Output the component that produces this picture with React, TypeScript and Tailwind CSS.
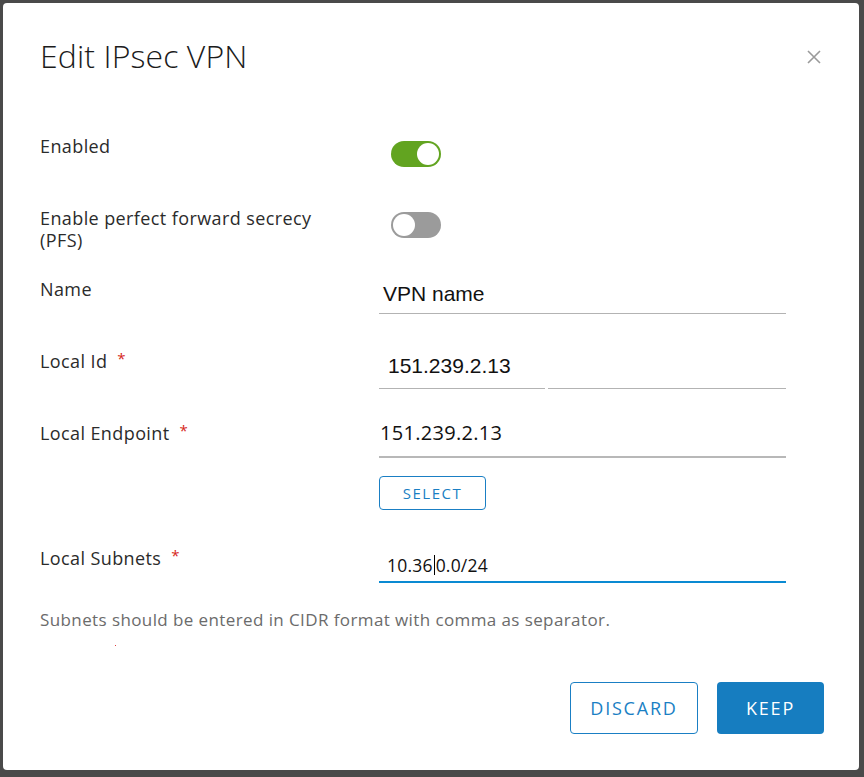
import React from "react";

function Toggle({ on }: { on: boolean }) {
  return (
    <div
      className={
        "w-[50px] h-[26px] rounded-full p-[2px] flex " +
        (on ? "bg-[#62a420] justify-end" : "bg-[#9b9b9b] justify-start")
      }
    >
      <div className="w-[22px] h-[22px] rounded-full bg-white" />
    </div>
  );
}

function Req() {
  return <span className="ml-[10px] text-[#d6261a] text-[15px] leading-none relative top-[1px]">*</span>;
}

export default function App() {
  const sans = { fontFamily: '"Open Sans", "Noto Sans", sans-serif' };
  const helv = { fontFamily: '"Liberation Sans", Arial, sans-serif' };
  const label = "w-[339px] text-[18px] leading-[22px] tracking-[0.4px] flex items-start";
  return (
    <div className="w-[864px] h-[777px] bg-[#4a4a4a] pt-[3px] pl-[3px] pr-[5px] pb-[7px]">
      <div className="bg-white rounded-[4px] h-full px-[37px] text-[#2b2b2b]" style={sans}>
        <div className="flex items-center justify-between pt-[31px]">
          <h1 className="text-[32px] font-light leading-[44px] tracking-[0.1px] text-[#1b1b1b]">Edit IPsec VPN</h1>
          <svg width="16" height="16" viewBox="0 0 16 16" className="mt-[2px]">
            <path d="M2 2 L14 14 M14 2 L2 14" stroke="#9a9a9a" strokeWidth="1.6" fill="none" />
          </svg>
        </div>

        <div className="mt-[57px] flex">
          <div className={label}>Enabled</div>
          <div className="mt-[6px] ml-[12px]">
            <Toggle on={true} />
          </div>
        </div>

        <div className="mt-[40px] flex">
          <div className={label}>
            <div>
              Enable perfect forward secrecy
              <br />
              (PFS)
            </div>
          </div>
          <div className="mt-[5px] ml-[12px]">
            <Toggle on={false} />
          </div>
        </div>

        <div className="mt-[27px] flex">
          <div className={label}>Name</div>
          <div className="w-[407px] h-[36px] border-b border-[#b3b3b3] flex items-center pl-[4px] pb-[3px] text-[21px] text-[#111]" style={helv}>
            VPN name
          </div>
        </div>

        <div className="mt-[36px] flex">
          <div className={label}>
            Local Id<Req />
          </div>
          <div className="w-[407px] h-[36px] flex flex-col">
            <div className="flex-1 flex items-center pl-[9px] pb-[6px] text-[21px] text-[#111]" style={helv}>151.239.2.13</div>
            <div className="flex gap-[3px]">
              <div className="w-[166px] h-[1px] bg-[#b3b3b3]" />
              <div className="flex-1 h-[1px] bg-[#b3b3b3]" />
            </div>
          </div>
        </div>

        <div className="mt-[36px] flex">
          <div className={label}>
            Local Endpoint<Req />
          </div>
          <div className="w-[407px]">
            <div className="h-[36px] border-b-2 border-[#b8b8b8] flex items-center pl-[1px] pb-[12px] text-[20px] tracking-[0.3px] text-[#111]">
              151.239.2.13
            </div>
            <button className="mt-[18px] w-[107px] h-[34px] border border-[#1a7fc4] rounded-[4px] text-[#1a7fc4] text-[15px] tracking-[1.5px] flex items-center justify-center">
              SELECT
            </button>
          </div>
        </div>

        <div className="mt-[37px] flex">
          <div className={label}>
            Local Subnets<Req />
          </div>
          <div className="w-[407px] h-[36px] border-b-2 border-[#0a8ad2] flex items-center pl-[8px] pt-[2px] text-[17.5px] tracking-[0.2px] text-[#111]">
            10.36<span className="inline-block w-[1px] h-[20px] bg-black mx-[1px]" />0.0/24
          </div>
        </div>

        <div className="mt-[26px] text-[17px] leading-[22px] tracking-[0.4px] text-[#6b6b6b]">
          Subnets should be entered in CIDR format with comma as separator.
        </div>
        <div className="mt-[14px] ml-[75px] w-[1px] h-[1px] bg-[#e04040]" />

        <div className="mt-[36px] flex justify-end gap-[19px] mr-[-2px]">
          <button className="w-[128px] h-[52px] border border-[#1a7fc4] rounded-[4px] text-[#1a7fc4] text-[18px] tracking-[1.8px]">
            DISCARD
          </button>
          <button className="w-[107px] h-[52px] bg-[#167dc0] rounded-[4px] text-white text-[18px] tracking-[1.8px]">
            KEEP
          </button>
        </div>
      </div>
    </div>
  );
}
